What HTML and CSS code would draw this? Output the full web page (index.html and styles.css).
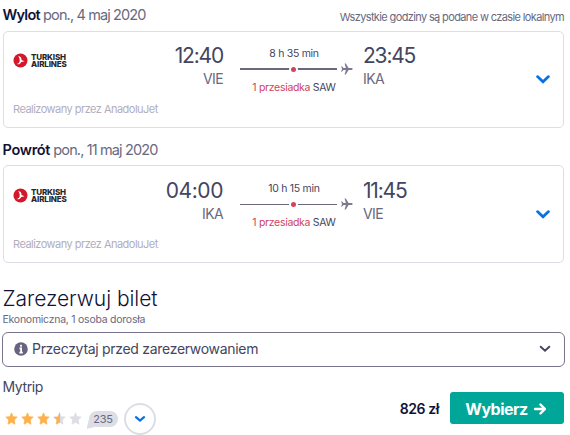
FILE: index.html
```html
<!DOCTYPE html>
<html lang="pl">
<head>
    <meta charset="UTF-8">
    <meta name="viewport" content="width=device-width, initial-scale=1.0">
    <title>Zarezerwuj bilet</title>
    <link rel="stylesheet" href="styles.css">
</head>
<body>
    <div class="leg-header">
        <div class="leg-date"><strong>Wylot</strong> <span>pon., 4 maj 2020</span></div>
        <div class="local-time">Wszystkie godziny są podane w czasie lokalnym</div>
    </div>
    <div class="leg-card">
        <div class="airline">
            <div class="logo">
                <svg width="15" height="15" viewBox="0 0 15 15"><circle cx="7.5" cy="7.5" r="7" fill="#d3182a"/><path d="M5.2 2.8C7.6 3.4 8.7 5 8.5 7L11.6 8.3 8.3 8.9C7.4 10.9 5.7 11.6 3.2 11.1 5.4 10.6 6.6 9.5 6.7 7.9 6.8 6 6.2 4.4 5.2 2.8Z" fill="#fff"/></svg>
                <span class="logo-text">TURKISH<br>AIRLINES</span>
            </div>
            <div class="operated">Realizowany przez AnadoluJet</div>
        </div>
        <div class="point depart">
            <div class="time narrow">12:40</div>
            <div class="code">VIE</div>
        </div>
        <div class="stops">
            <div class="duration">8 h 35 min</div>
            <div class="route">
                <div class="line thick"><span class="dot"></span></div>
                <svg class="plane" width="12" height="12" viewBox="0 0 12 12"><path d="M.8 3.2L2.6 5.1H4.9L3.6.6H4.8L7.6 5.1H10.5Q11.6 5.2 11.8 6 11.6 6.8 10.5 6.9H7.6L4.8 11.4H3.6L4.9 6.9H2.6L.8 8.8H.2L1 6 .2 3.2Z" fill="#7d7890"/></svg>
            </div>
            <div class="via"><span class="stop-count">1 przesiadka</span> SAW</div>
        </div>
        <div class="point arrive">
            <div class="time narrow">23:45</div>
            <div class="code">IKA</div>
        </div>
        <svg class="chevron" width="14" height="9" viewBox="0 0 14 9"><path d="M1.5 1.6L7 6.8 12.5 1.6" fill="none" stroke="#0770e3" stroke-width="2.7" stroke-linecap="round"/></svg>
    </div>

    <div class="leg-header second">
        <div class="leg-date"><strong class="return">Powrót</strong> <span>pon., 11 maj 2020</span></div>
    </div>
    <div class="leg-card inbound">
        <div class="airline">
            <div class="logo">
                <svg width="15" height="15" viewBox="0 0 15 15"><circle cx="7.5" cy="7.5" r="7" fill="#d3182a"/><path d="M5.2 2.8C7.6 3.4 8.7 5 8.5 7L11.6 8.3 8.3 8.9C7.4 10.9 5.7 11.6 3.2 11.1 5.4 10.6 6.6 9.5 6.7 7.9 6.8 6 6.2 4.4 5.2 2.8Z" fill="#fff"/></svg>
                <span class="logo-text">TURKISH<br>AIRLINES</span>
            </div>
            <div class="operated">Realizowany przez AnadoluJet</div>
        </div>
        <div class="point depart">
            <div class="time">04:00</div>
            <div class="code">IKA</div>
        </div>
        <div class="stops">
            <div class="duration">10 h 15 min</div>
            <div class="route">
                <div class="line"><span class="dot"></span></div>
                <svg class="plane" width="12" height="12" viewBox="0 0 12 12"><path d="M.8 3.2L2.6 5.1H4.9L3.6.6H4.8L7.6 5.1H10.5Q11.6 5.2 11.8 6 11.6 6.8 10.5 6.9H7.6L4.8 11.4H3.6L4.9 6.9H2.6L.8 8.8H.2L1 6 .2 3.2Z" fill="#7d7890"/></svg>
            </div>
            <div class="via"><span class="stop-count">1 przesiadka</span> SAW</div>
        </div>
        <div class="point arrive">
            <div class="time narrow">11:45</div>
            <div class="code">VIE</div>
        </div>
        <svg class="chevron" width="14" height="9" viewBox="0 0 14 9"><path d="M1.5 1.6L7 6.8 12.5 1.6" fill="none" stroke="#0770e3" stroke-width="2.7" stroke-linecap="round"/></svg>
    </div>

    <h1>Zarezerwuj bilet</h1>
    <div class="cabin">Ekonomiczna, 1 osoba dorosła</div>

    <div class="notice">
        <svg width="14" height="14" viewBox="0 0 14 14"><circle cx="7" cy="7" r="6.8" fill="#68647f"/><path d="M7 2.8V4.7M5.5 6.3H7.1V10.6M5.4 10.6H8.8" fill="none" stroke="#fff" stroke-width="1.8"/></svg>
        <span class="notice-text">Przeczytaj przed zarezerwowaniem</span>
        <svg class="notice-arrow" width="12" height="8" viewBox="0 0 12 8"><path d="M1.7 1.7L6 5.6 10.3 1.7" fill="none" stroke="#444560" stroke-width="1.9" stroke-linecap="round"/></svg>
    </div>

    <div class="offer">
        <div class="agent">
            <div class="agent-name">Mytrip</div>
            <div class="rating">
                <svg class="stars" width="78" height="14" viewBox="0 0 78 14">
                    <defs><path id="star" d="M6.5 .9L8.1 4.7 12.2 5.1 9.2 8 10 12.2 6.5 10.2 3 12.2 3.8 8 .8 5.1 4.9 4.7Z" stroke-width=".8" stroke-linejoin="round"/></defs>
                    <g fill="#ffb04d" stroke="#ffb04d">
                        <use href="#star"/>
                        <use href="#star" x="16"/>
                        <use href="#star" x="32"/>
                    </g>
                    <g fill="#dddde5" stroke="#dddde5">
                        <use href="#star" x="48"/>
                        <use href="#star" x="64"/>
                    </g>
                    <path d="M55 .5V10.4L51 12.5 51.8 8 48.4 5.1 52.9 4.7 54.5 .5Z" fill="#ffb04d"/>
                </svg>
                <span class="reviews">235</span>
                <button class="more"><svg width="12" height="8" viewBox="0 0 12 8"><path d="M2 2.2L6 5.5 10 2.2" fill="none" stroke="#0770e3" stroke-width="2.2" stroke-linecap="round"/></svg></button>
            </div>
        </div>
        <div class="price">826 zł</div>
        <button class="select-btn"><span>Wybierz</span><svg width="12" height="12" viewBox="0 0 12 12"><path d="M1 6H10.5M6.5 1.6L11 6 6.5 10.4" fill="none" stroke="#fff" stroke-width="2.4" stroke-linecap="round" stroke-linejoin="round"/></svg></button>
    </div>
</body>
</html>
```
FILE: styles.css
```css
:root {
    --dark: #111236;
    --text: #444560;
    --muted: #68697f;
    --light: #b2aebd;
    --border: #dddde5;
    --red: #d1435b;
    --green: #00a698;
}

* {
    box-sizing: border-box;
}

body {
    font-family: Inter, "Noto Sans", sans-serif;
    background: #fff;
    color: var(--text);
    margin: 0;
    padding: 0 5px 0 2px;
    height: 435px;
    overflow: hidden;
    white-space: nowrap;
}

.leg-header {
    display: flex;
    justify-content: space-between;
    height: 31px;
    padding: 0 1px 0 0.5px;
}

.leg-header.second {
    height: 37px;
    padding-top: 7px;
}

.leg-date {
    font-size: 14.5px;
    line-height: 29px;
    letter-spacing: -0.87px;
    color: var(--muted);
}

.leg-date strong {
    font-weight: 600;
    letter-spacing: -0.75px;
    color: var(--dark);
}

.leg-date strong.return {
    letter-spacing: -0.3px;
}

.local-time {
    font-size: 11px;
    line-height: 35px;
    letter-spacing: -0.63px;
    color: var(--muted);
}

.leg-card {
    display: grid;
    grid-template-columns: 149px 61px 140px 160px 1fr;
    height: 97px;
    margin: 0 1px;
    padding-left: 9px;
    border: 1px solid var(--border);
    border-radius: 5px;
}

.leg-card.inbound {
    height: 98px;
    padding-top: 1px;
}

.airline {
    display: flex;
    flex-direction: column;
    justify-content: space-between;
    padding: 20px 0 10px;
}

.logo {
    display: flex;
    align-items: center;
    gap: 3px;
    height: 17px;
}

.logo-text {
    font-size: 8px;
    line-height: 7px;
    font-weight: 800;
    letter-spacing: -0.15px;
    color: #27262b;
}

.operated {
    font-size: 11px;
    line-height: 16px;
    letter-spacing: -0.52px;
    color: var(--light);
}

.point {
    padding-top: 11px;
}

.depart {
    text-align: right;
}

.time {
    font-size: 21px;
    line-height: 26px;
    letter-spacing: -0.4px;
}

.time.narrow {
    letter-spacing: -1.2px;
}

.code {
    font-size: 14px;
    line-height: 20px;
    letter-spacing: -0.6px;
    color: var(--muted);
}

.stops {
    padding: 14px 10px 0 18px;
}

.duration,
.via {
    width: 106px;
    font-size: 10.5px;
    line-height: 16px;
    letter-spacing: -0.3px;
    text-align: center;
}

.route {
    display: flex;
    align-items: center;
    gap: 4px;
    height: 14px;
}

.line {
    display: flex;
    align-items: center;
    justify-content: center;
    width: 97px;
    height: 1px;
    margin-left: -1px;
    background: var(--muted);
}

.line.thick {
    height: 2px;
}

.dot {
    width: 9px;
    height: 9px;
    flex: none;
    margin-left: 10px;
    border: 2px solid #fff;
    border-radius: 50%;
    background: var(--red);
}

.via {
    margin-top: 4px;
}

.stop-count {
    color: var(--red);
}

.chevron {
    align-self: center;
    margin-left: 12.5px;
}

h1 {
    margin: 22px 0 0 0.5px;
    font-size: 21px;
    line-height: 28px;
    font-weight: 300;
    letter-spacing: -0.05px;
    color: var(--dark);
}

.cabin {
    height: 19px;
    margin-left: 0.5px;
    font-size: 10.5px;
    line-height: 13px;
    letter-spacing: -0.25px;
    color: var(--muted);
}

.notice {
    display: flex;
    align-items: center;
    height: 35px;
    padding: 0 13px 2px 11px;
    border: 1px solid #78748c;
    border-radius: 6px;
}

.notice-text {
    margin-left: 4px;
    font-size: 14px;
    letter-spacing: -0.3px;
}

.notice-arrow {
    margin-left: auto;
}

.offer {
    display: flex;
    padding-right: 1px;
}

.agent {
    flex: 1;
    padding: 10px 0 0 0.5px;
}

.agent-name {
    font-size: 14px;
    line-height: 20px;
    letter-spacing: -0.4px;
}

.rating {
    display: flex;
    align-items: center;
    margin-top: 6px;
}

.stars {
    margin-left: 2px;
}

.reviews {
    position: relative;
    width: 29px;
    height: 16px;
    margin-left: 6px;
    border-radius: 8px;
    background: var(--border);
    color: var(--muted);
    font-size: 11px;
    line-height: 16px;
    letter-spacing: -0.3px;
    text-align: center;
}

/* speech bubble tail */
.reviews::before {
    content: "";
    position: absolute;
    left: -2px;
    bottom: -2px;
    width: 12px;
    height: 12px;
    background: var(--border);
    clip-path: polygon(25% 0, 100% 75%, 0 100%);
    z-index: -1;
}

.more {
    display: flex;
    align-items: center;
    justify-content: center;
    width: 32px;
    height: 32px;
    margin-left: 6px;
    padding: 0;
    border: 2px solid var(--border);
    border-radius: 50%;
    background: #fff;
}

.price {
    margin-right: 11px;
    padding-top: 32px;
    font-size: 14px;
    line-height: 20px;
    font-weight: 600;
    letter-spacing: -0.4px;
    color: var(--dark);
}

.select-btn {
    display: flex;
    align-items: center;
    justify-content: center;
    gap: 6px;
    width: 114px;
    height: 32px;
    margin-top: 25px;
    padding: 2px 3px 0 0;
    border: 0;
    border-radius: 3px;
    background: var(--green);
    color: #fff;
    font-family: inherit;
    font-size: 16px;
    font-weight: 700;
    letter-spacing: -0.5px;
}
```
